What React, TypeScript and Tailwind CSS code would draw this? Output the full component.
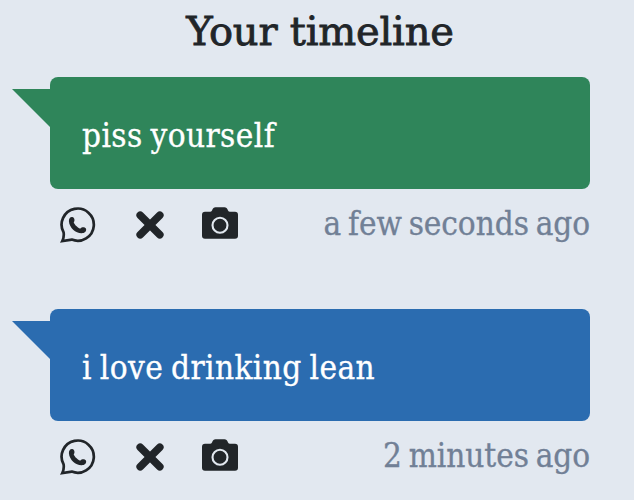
import React from "react";

const ink = "#212529";

function WhatsAppIcon() {
  return (
    <svg width="36" height="36" viewBox="0 0 36 36" className="block">
      <path
        d="M3.6 25.4A16.1 16.1 0 1 1 11.7 32.6L2.3 34.1Q4.3 30 3.6 25.4Z"
        fill="none"
        stroke={ink}
        strokeWidth="2.7"
        strokeLinejoin="miter"
      />
      <path
        d="M12.2 10C10.1 9.8 8.8 11.7 8.9 14.2C9.4 20.8 15.8 26.4 21.8 26.2C24.5 26.2 26.5 24.5 26.1 22C25.6 20 21.6 19.8 20.5 21.5C18.6 21.5 14.4 17.8 13.7 15.2C15.1 14.3 14.7 10.3 12.2 10Z"
        fill={ink}
      />
    </svg>
  );
}

function CloseIcon() {
  return (
    <svg width="28" height="28" viewBox="0 0 28 28" className="block">
      <path d="M4.2 4.2L23.8 23.8M23.8 4.2L4.2 23.8" stroke={ink} strokeWidth="7.6" strokeLinecap="round" />
    </svg>
  );
}

function CameraIcon() {
  return (
    <svg width="36" height="32" viewBox="0 0 36 32" className="block">
      <path
        d="M3 4.8H8Q9.4 4.8 10 3.4Q11.2 .2 13.5 .2H22.5Q24.8 .2 26 3.4Q26.6 4.8 28 4.8H33Q36 4.8 36 7.8V28.8Q36 31.8 33 31.8H3Q0 31.8 0 28.8V7.8Q0 4.8 3 4.8Z"
        fill={ink}
      />
      <circle cx="18" cy="18.3" r="7.5" fill="none" stroke="#e2e8f0" strokeWidth="2.1" />
    </svg>
  );
}

interface PostProps {
  text: string;
  time: string;
  bubble: string;
  tail: string;
}

function Post({ text, time, bubble, tail }: PostProps) {
  return (
    <article className="h-[232px]">
      <div className={`relative flex h-28 items-center rounded-lg pt-[5px] pl-8 text-[33px] leading-none text-white ${bubble}`}>
        <svg className={`absolute top-3 -left-[38px] ${tail}`} width="38" height="38" viewBox="0 0 38 38">
          <path d="M0 0H38V38Z" fill="currentColor" />
        </svg>
        <span className="whitespace-nowrap tracking-[0.42px] [-webkit-text-stroke:0.3px_white] [word-spacing:-2px]">{text}</span>
      </div>
      <div className="flex h-[72px] items-center pl-[10px]">
        <WhatsAppIcon />
        <div className="ml-10"><CloseIcon /></div>
        <div className="mb-1 ml-[38px]"><CameraIcon /></div>
        <span className="mb-1 ml-auto whitespace-nowrap text-[33px] leading-none tracking-[-0.07px] text-[#718096] [-webkit-text-stroke:0.3px_#718096] [word-spacing:-2.5px]">{time}</span>
      </div>
    </article>
  );
}

export default function App() {
  return (
    <main className="h-[500px] w-[634px] overflow-hidden bg-[#e2e8f0] pr-11 pl-[50px] font-['DejaVu_Serif_Condensed','DejaVu_Serif',serif] [font-stretch:condensed]">
      <h1 className="flex h-[77px] justify-center pt-[11px] font-['DejaVu_Serif',serif] text-[40px] leading-none font-normal tracking-[-0.2px] text-[#212529] [-webkit-text-stroke:0.8px_#212529] [font-stretch:normal]">
        Your timeline
      </h1>
      <Post text="piss yourself" time="a few seconds ago" bubble="bg-[#2f855a]" tail="text-[#2f855a]" />
      <Post text="i love drinking lean" time="2 minutes ago" bubble="bg-[#2b6cb0]" tail="text-[#2b6cb0]" />
    </main>
  );
}
